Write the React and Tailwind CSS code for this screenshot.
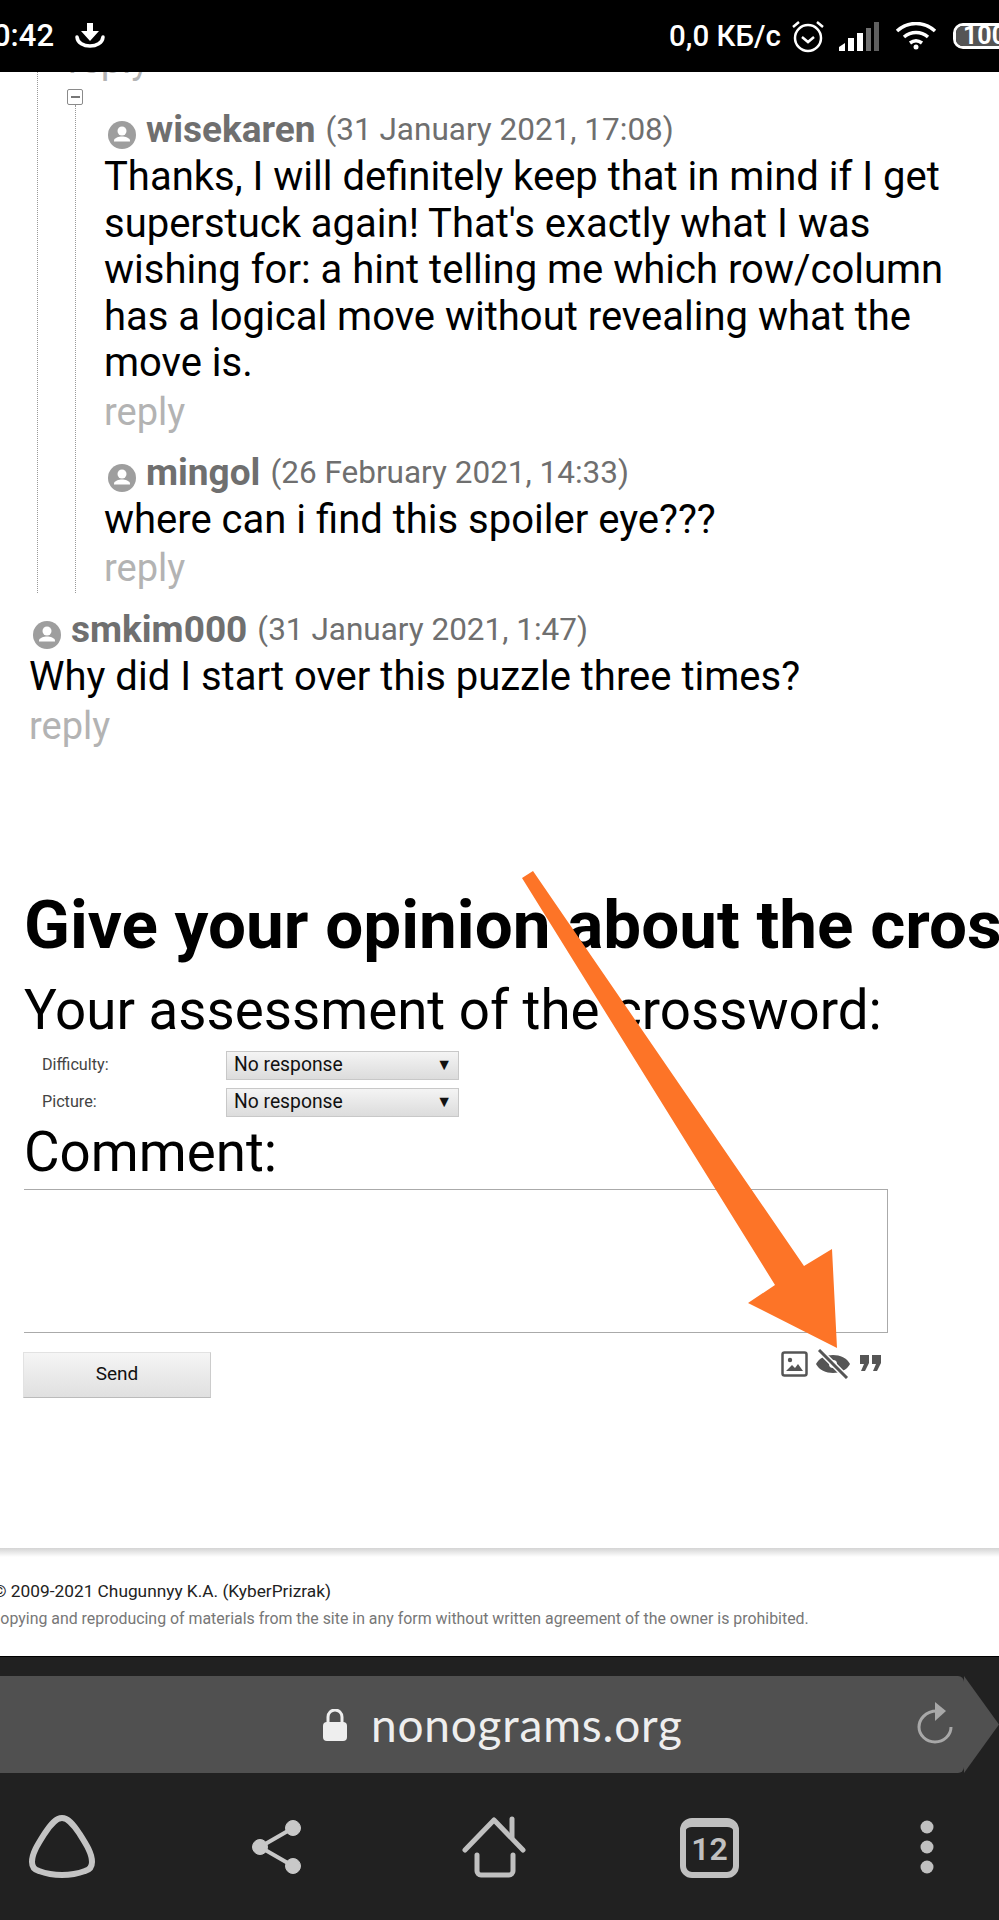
const roboto = "font-['Roboto',sans-serif]";

function Avatar() {
  return (
    <svg viewBox="0 0 28 28" className="w-7 h-7 shrink-0 mt-[12px]">
      <circle cx="14" cy="14" r="14" fill="#9e9e9e" />
      <circle cx="14" cy="10" r="4.5" fill="#fff" />
      <path d="M6 19.5c0-2.5 5-4 8-4s8 1.500 8 4v1H6z" fill="#fff" />
    </svg>
  );
}

function Comment({ name, date, lines }) {
  return (
    <div>
      <div className="flex items-start h-[42px] pl-1 whitespace-nowrap">
        <Avatar />
        <span className="ml-[10px] text-[37px] leading-[42px] font-bold text-[#6f6f6f]">{name}</span>
        <span className="ml-[10px] text-[31.500px] leading-[42px] text-[#6f6f6f]">({date})</span>
      </div>
      <div className="text-[40px] leading-[46.5px] text-black mt-[3px]">
        {lines.map((l) => (
          <div key={l} className="whitespace-nowrap">{l}</div>
        ))}
      </div>
      <div className="text-[38px] leading-[50px] text-[#b3b3b3]">reply</div>
    </div>
  );
}

function StatusBar() {
  return (
    <div className="h-[72px] shrink-0 bg-black flex items-center text-white text-[30px] font-medium overflow-hidden">
      <span className="-ml-[7px] w-[82px] text-[31px] whitespace-nowrap">0:42</span>
      <svg viewBox="0 0 30 26" className="w-[30px] h-[26px]">
        <path d="M12 0h6v8h6l-9 10-9-10h6z" fill="#fff" />
        <path d="M2 14c1 12 25 12 26 0" fill="none" stroke="#fff" strokeWidth="3.500" strokeLinecap="round" />
      </svg>
      <span className="ml-auto whitespace-nowrap text-[29.500px]">0,0 КБ/с</span>
      <svg viewBox="0 0 34 34" className="w-[34px] h-[34px] ml-[10px]" fill="none" stroke="#fff" strokeWidth="2.500">
        <circle cx="17" cy="19" r="13" />
        <path d="M11 18l6 5 6-5" />
        <path d="M2 8l6-5M32 8l-6-5" />
      </svg>
      <svg viewBox="0 0 40 29" className="w-[40px] h-[29px] ml-[14px]">
        <polygon points="0,29 0,25 6,21 6,29" fill="#fff" />
        <rect x="9" y="16" width="6" height="13" fill="#fff" />
        <rect x="18" y="11" width="6" height="18" fill="#fff" />
        <rect x="27" y="6" width="5" height="23" fill="#707070" />
        <rect x="35" y="0" width="5" height="29" fill="#606060" />
      </svg>
      <svg viewBox="0 0 42 28" className="w-[42px] h-[28px] ml-[16px]" fill="none" stroke="#fff" strokeWidth="3.500">
        <path d="M2 9c11-10 27-10 38 0" />
        <path d="M9 15c7-6 17-6 24 0" />
        <path d="M15 21c4-3 8-3 12 0" />
        <circle cx="21" cy="25" r="2.500" fill="#fff" stroke="none" />
      </svg>
      <div className="ml-[16px] -mr-[40px] w-[86px] h-[26px] rounded-[10px] border-[3px] border-white text-[25px] leading-[20px] font-bold overflow-hidden shrink-0 flex">
        <span className="w-[7px] shrink-0 bg-[#555]" />
        <span className="bg-[#555]">100</span>
      </div>
    </div>
  );
}

function Select() {
  return (
    <div className="w-[233px] h-[29px] border border-[#c8c8c8] bg-gradient-to-b from-[#f4f4f4] to-[#dcdcdc] flex items-center justify-between pl-[7px] pr-[6px] text-[19.300px] text-[#111]">
      <span>No response</span>
      <span className="text-[16px]">▼</span>
    </div>
  );
}

function BottomBar() {
  return (
    <div className="h-[264px] shrink-0 bg-[#212121] border-t border-black">
      <div className="relative mt-[19px] h-[97px] w-[965px] bg-[#505050] rounded-r-md -ml-px flex items-center">
        <div className="absolute left-[965px] top-0 w-[35px] h-[97px] bg-[#505050] [clip-path:polygon(0_0,100%_50%,0_100%)]" />
        <svg viewBox="0 0 26 32" className="w-[26px] h-[32px] ml-[323px]">
          <path d="M6 14V8a7 7 0 0 1 14 0v6" fill="none" stroke="#eee" strokeWidth="3" />
          <rect x="1" y="13" width="24" height="19" rx="4" fill="#eee" />
        </svg>
        <span className="ml-[23px] font-['Lato',sans-serif] text-[46px] leading-none text-[#eeeeee] tracking-[0.8px]">nonograms.org</span>
        <svg viewBox="0 0 36 42" className="absolute left-[918px] top-[26px] w-[36px] h-[42px]" fill="none" stroke="#a8a8a8" strokeWidth="3">
          <path d="M20 9C8 9 2 18 2 25c0 8 7 15 16 15s16-7 16-15" />
          <path d="M18 0l11 9-11 10z" fill="#a8a8a8" stroke="none" />
        </svg>
      </div>
      <div className="flex items-center mt-[42px] h-[63px]">
        <svg viewBox="0 0 66 63" className="w-[66px] h-[63px] ml-[29px]" fill="none" stroke="#c4c4c4" strokeWidth="6">
          <path d="M33 3C27 3 22 9 16 18 9 29 3 38 3 47c0 5 3 8 7 9 8 3 15 4 23 4s15-1 23-4c4-1 7-4 7-9 0-9-6-18-13-29C44 9 39 3 33 3z" />
        </svg>
        <svg viewBox="0 0 49 54" className="w-[49px] h-[54px] ml-[157px]" fill="#c8c8c8" stroke="#c8c8c8">
          <path d="M41 8L8 27l33 19" fill="none" strokeWidth="4" />
          <circle cx="8" cy="27" r="7.500" />
          <circle cx="41" cy="8" r="7.500" />
          <circle cx="41" cy="46" r="7.500" />
        </svg>
        <svg viewBox="0 0 64 62" className="w-[64px] h-[62px] ml-[161px]" fill="none" stroke="#c0c0c0" strokeWidth="5" strokeLinecap="round" strokeLinejoin="round">
          <path d="M3 34L32 4l29 30" />
          <path d="M50 3v18" />
          <path d="M15 39v16a4 4 0 0 0 4 4h28a4 4 0 0 0 4-4V39" />
        </svg>
        <div className="ml-[154px] w-[59px] h-[60px] mt-[2px] rounded-[12px] border-[6px] border-t-[9px] border-[#c0c0c0] flex items-center justify-center text-[#c0c0c0] text-[32px] font-semibold">
          12
        </div>
        <svg viewBox="0 0 14 54" className="w-[14px] h-[54px] ml-[181px]" fill="#c0c0c0">
          <circle cx="7" cy="7" r="6.500" />
          <circle cx="7" cy="27" r="6.500" />
          <circle cx="7" cy="47" r="6.500" />
        </svg>
      </div>
    </div>
  );
}

export default function App() {
  return (
    <div className={`relative w-[999px] h-[1920px] overflow-hidden flex flex-col bg-white ${roboto}`}>
      <StatusBar />
      <div className="flex-1 flex flex-col overflow-hidden">
        {/* comment thread */}
        <div className="relative h-[521px] shrink-0">
          <div className="absolute left-[37px] top-0 bottom-0 border-l border-dotted border-[#999999]" />
          <div className="absolute left-[75px] top-[33px] bottom-0 border-l border-dotted border-[#999999]" />
          <div className="-mt-[32px] ml-[68px] text-[38px] leading-[40px] text-[#b3b3b3] h-[40px]">reply</div>
          <div className="ml-[67px] mt-[9px] w-[16px] h-[16px] border border-[#8a8a8a] rounded-[2px] flex items-center justify-center">
            <div className="w-[9px] h-[2px] bg-[#777]" />
          </div>
          <div className="ml-[104px] mt-[4px]">
            <Comment
              name="wisekaren"
              date="31 January 2021, 17:08"
              lines={[
                "Thanks, I will definitely keep that in mind if I get",
                "superstuck again! That's exactly what I was",
                "wishing for: a hint telling me which row/column",
                "has a logical move without revealing what the",
                "move is.",
              ]}
            />
            <div className="h-[15px]" />
            <Comment name="mingol" date="26 February 2021, 14:33" lines={["where can i find this spoiler eye???"]} />
          </div>
        </div>
        <div className="ml-[29px] mt-[16px]">
          <Comment name="smkim000" date="31 January 2021, 1:47" lines={["Why did I start over this puzzle three times?"]} />
        </div>

        {/* rating form */}
        <div className="ml-[24px] mt-[136px]">
          <h1 className="text-[67.400px] leading-[75px] font-bold text-black whitespace-nowrap">Give your opinion about the crossword</h1>
          <div className="text-[54.700px] leading-[66px] mt-[15px] text-black whitespace-nowrap">Your assessment of the crossword:</div>
          <div className="mt-[8px] flex flex-col gap-[8px]">
            <div className="flex items-center">
              <span className="w-[202px] pl-[18px] text-[16.200px] text-[#444]">Difficulty:</span>
              <Select />
            </div>
            <div className="flex items-center">
              <span className="w-[202px] pl-[18px] text-[16.200px] text-[#444]">Picture:</span>
              <Select />
            </div>
          </div>
          <div className="text-[54.700px] leading-[66px] mt-[2px] text-black">Comment:</div>
          <div className="mt-[4px] w-[864px] h-[144px] border-y border-r border-[#aaaaaa]" />
          <div className="mt-[19px] flex justify-between w-[858px]">
            <div className="-ml-px w-[188px] h-[46px] border border-[#e2e2e2] border-b-[#bbbbbb] border-r-[#cccccc] bg-gradient-to-b from-[#f5f5f5] to-[#e0e0e0] flex items-center justify-center text-[19px] text-[#111]">
              Send
            </div>
            <div className="flex items-start gap-[8px] -mt-[1px]">
              <svg viewBox="0 0 27 26" className="w-[27px] h-[26px]" fill="#555">
                <rect x="1.500" y="1.500" width="24" height="23" rx="2" fill="none" stroke="#555" strokeWidth="2.500" />
                <circle cx="9" cy="9" r="2.200" />
                <path d="M5 20l6-6 3 3 3-4 5 7z" />
              </svg>
              <svg viewBox="0 0 34 30" className="w-[34px] h-[30px] -mt-[2px]">
                <path d="M0 15C6 3 28 3 34 15 28 27 6 27 0 15z" fill="#555" />
                <circle cx="17" cy="15" r="4" fill="#fff" />
                <path d="M3 1l28 28" stroke="#fff" strokeWidth="6" />
                <path d="M3 1l28 28" stroke="#555" strokeWidth="3" />
              </svg>
              <svg viewBox="0 0 22 16" className="w-[22px] h-[16px] ml-[2px] mt-[4px]" fill="#555">
                <path d="M0 0h9v8l-4 8H1l3-7H0zM12 0h9v8l-4 8h-4l3-7h-4z" />
              </svg>
            </div>
          </div>
        </div>

        {/* footer */}
        <div className="mt-auto h-[110px] shrink-0 relative pt-[32px]">
          <div className="absolute left-0 right-0 top-[2px] h-[9px] bg-gradient-to-b from-[#d4d4d4] to-white" />
          <div className="-ml-[7px] text-[17.300px] leading-[27px] text-[#222] whitespace-nowrap">© 2009-2021 Chugunnyy K.A. (KyberPrizrak)</div>
          <div className="-ml-[10px] text-[15.900px] leading-[27px] text-[#777] whitespace-nowrap">Copying and reproducing of materials from the site in any form without written agreement of the owner is prohibited.</div>
        </div>
      </div>
      <BottomBar />

      {/* annotation arrow */}
      <svg className="absolute inset-0 w-[999px] h-[1920px] pointer-events-none" viewBox="0 0 999 1920">
        <polygon points="522,878 533,871 804,1266 832,1249 837,1348 748,1303 775,1285" fill="#fd7427" />
      </svg>
    </div>
  );
}
